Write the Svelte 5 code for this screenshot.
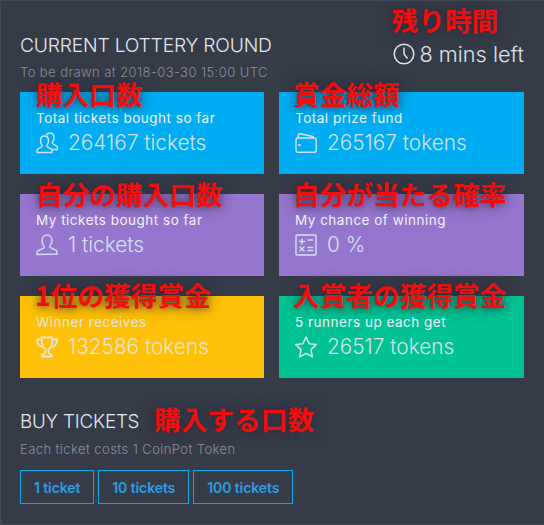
<script>
  const cards = [
    { cls: 'blue', note: '購入口数', noteCls: 'n1 r1', label: 'Total tickets bought so far', value: '264167 tickets', icon: 'users' },
    { cls: 'blue', note: '賞金総額', noteCls: 'n2 r1', label: 'Total prize fund', value: '265167 tokens', icon: 'wallet' },
    { cls: 'purple', note: '自分の購入口数', noteCls: 'n1 r2', label: 'My tickets bought so far', value: '1 tickets', icon: 'user' },
    { cls: 'purple', note: '自分が当たる確率', noteCls: 'n2 r2', label: 'My chance of winning', value: '0 %', icon: 'calc' },
    { cls: 'amber', note: '1位の獲得賞金', noteCls: 'n3 r3', label: 'Winner receives', value: '132586 tokens', icon: 'trophy' },
    { cls: 'green', note: '入賞者の獲得賞金', noteCls: 'n2 r3', label: '5 runners up each get', value: '26517 tokens', icon: 'star' }
  ];
</script>

<main class="page">
  <header class="top">
    <div>
      <h2 class="title">CURRENT LOTTERY ROUND</h2>
      <p class="sub">To be drawn at 2018-03-30 15:00 UTC</p>
    </div>
    <div class="timer">
      <span class="note timer-note">残り時間</span>
      <svg class="clock" viewBox="0 0 22 22" width="22" height="22" fill="none" stroke="currentColor" stroke-width="1.5">
        <circle cx="11" cy="11" r="9.8" />
        <path d="M11 4.500V11l3.500 4.500" />
      </svg>
      <span>8 mins left</span>
    </div>
  </header>

  <section class="grid">
    {#each cards as c}
      <article class="card {c.cls}">
        <span class="note {c.noteCls}">{c.note}</span>
        <div class="label">{c.label}</div>
        <div class="value">
          <svg class="icon" viewBox="0 0 22 22" width="22" height="22" fill="none" stroke="currentColor" stroke-width="1.4" stroke-linejoin="round" stroke-linecap="round">
            {#if c.icon === 'users'}
              <path d="M1 20.500v-2.200c0-1.600 4.600-2.700 5.200-4 .3-.8-.2-1.300-.7-2-.7-1-1-2.200-1-3.600C4.500 5.700 6 4 8.500 4s4 1.700 4 4.700c0 1.400-.3 2.600-1 3.600-.5.700-1 1.200-.7 2 .6 1.300 5.200 2.400 5.200 4v2.200z" />
              <path d="M10.500 3c.8-1.300 2-2 3.500-2 2.500 0 4 1.700 4 4.700 0 1.400-.3 2.600-1 3.600-.5.700-1 1.200-.7 2 .5 1.200 5.200 2.200 5.200 3.900v2.300H16" />
            {:else if c.icon === 'wallet'}
              <path d="M3 6l.6-3.500c.1-.6.5-.8 1-.7L18 4.500V6" />
              <rect x="1" y="6" width="20.200" height="14.300" rx="2" />
              <path d="M4 13h1" stroke-width="1.800" />
            {:else if c.icon === 'user'}
              <path d="M1 20.500v-2.500c0-2 6.500-3 7.200-4.500.3-.8-.2-1.400-.8-2.200-.8-1.100-1.400-2.600-1.400-4.300C6 3.500 8 1 11 1s5 2.500 5 5.500c0 1.700-.6 3.200-1.400 4.300-.6.800-1.100 1.400-.8 2.200.7 1.500 7.200 2.500 7.200 4.500v2.500z" />
            {:else if c.icon === 'calc'}
              <rect x="1" y="1" width="20" height="20" rx="1" />
              <path d="M4.500 7.500h5M7 5v5M13 6h4.500M5 13l4 4M9 13l-4 4M13 13.500h4.500M13 16.500h4.500" />
            {:else if c.icon === 'trophy'}
              <path d="M5.500 1.500h11c0 5-.5 10-4 11.500v3.500c0 1 2 1.500 3.500 3v1H6v-1c1.500-1.500 3.500-2 3.500-3V13c-3.500-1.500-4-6.500-4-11.500z" stroke-width="1.800" />
              <path d="M5.500 3.500H1c0 4 2 7 6 7.500M16.500 3.500H21c0 4-2 7-6 7.500" stroke-width="1.800" />
            {:else}
              <path d="M11 1l3.100 6.700 7.100.9-5.200 5 1.300 7.300-6.300-3.600-6.300 3.600L6 13.600.8 8.600l7.100-.9z" stroke-width="1.500" />
            {/if}
          </svg>
          <span>{c.value}</span>
        </div>
      </article>
    {/each}
  </section>

  <section class="buy">
    <div class="buy-head">
      <h2 class="title buy-title">BUY TICKETS</h2>
      <span class="note buy-note">購入する口数</span>
    </div>
    <p class="sub">Each ticket costs 1 CoinPot Token</p>
    <div class="btns">
      <button>1 ticket</button>
      <button>10 tickets</button>
      <button>100 tickets</button>
    </div>
  </section>
</main>

<style>
  :global(body) {
    margin: 0;
    background: #353a47;
  }
  .page {
    box-sizing: border-box;
    width: 544px;
    height: 525px;
    padding: 0 20px 0 19px;
    background: #363b48;
    border: 1px solid #444956;
    border-right: 0;
    color: #dfe6ee;
    font-family: "Inter", "Open Sans", sans-serif;
    font-weight: 300;
  }
  .top {
    display: flex;
    justify-content: space-between;
    align-items: flex-start;
    height: 91px;
  }
  .title {
    margin: 32px 0 0;
    font-size: 19.25px;
    line-height: 24px;
    font-weight: 300;
    letter-spacing: -0.2px;
    color: #e2e8f0;
  }
  .buy-title { font-size: 18.8px; }
  .sub {
    margin: 7px 0 0;
    font-size: 13px;
    line-height: 16px;
    letter-spacing: 0.42px;
    color: #8c91a0;
    font-weight: 300;
  }
  .timer {
    position: relative;
    display: flex;
    align-items: center;
    gap: 5px;
    margin-top: 40px;
    font-size: 21.7px;
    line-height: 26px;
    color: #dbe3ec;
  }
  .grid {
    display: grid;
    grid-template-columns: 244px 245px;
    grid-auto-rows: 82px;
    column-gap: 15px;
    row-gap: 20px;
  }
  .card {
    position: relative;
    padding: 17px 16px 0;
    color: #fff;
  }
  .blue { background: #00acf2; }
  .purple { background: #9575cd; }
  .amber { background: #ffc107; }
  .green { background: #00c292; }
  .label {
    font-size: 13.5px;
    line-height: 18px;
    font-weight: 400;
    letter-spacing: 0.5px;
    color: #f1f4f9;
  }
  .value {
    display: flex;
    align-items: center;
    gap: 10px;
    margin-top: 3px;
    font-size: 20.8px;
    line-height: 26px;
    color: #d5e2f0;
  }
  .icon { flex: none; }
  .amber .value, .amber .label { color: #e6e5d8; }
  .note {
    position: absolute;
    white-space: nowrap;
    font-family: "Noto Sans CJK JP", sans-serif;
    font-weight: 700;
    font-size: 26.7px;
    line-height: 27px;
    color: #f40d0d;
    text-shadow: 0 0 7px rgba(40, 44, 60, 0.7), 0 0 14px rgba(40, 44, 60, 0.5);
  }
  .n1 { left: 16px; }
  .n2 { left: 14px; }
  .n3 { left: 15px; }
  .r1 { top: -12px; }
  .r2 { top: -14px; }
  .r3 { top: -15px; }
  .timer-note { left: -1px; top: -35px; }
  .buy-head {
    position: relative;
    display: flex;
    align-items: center;
  }
  .buy-title { margin-top: 32px; }
  .buy-note { left: 134px; top: 27px; }
  .buy .sub { margin-top: 7px; }
  .btns {
    display: flex;
    gap: 4px;
    margin-top: 13px;
  }
  button {
    box-sizing: border-box;
    height: 34px;
    padding: 0 13px;
    background: transparent;
    border: 1px solid #06a9f0;
    border-radius: 0;
    color: #2a9fe6;
    font-family: inherit;
    font-size: 14px;
    letter-spacing: -0.1px;
    font-weight: 600;
  }
</style>
